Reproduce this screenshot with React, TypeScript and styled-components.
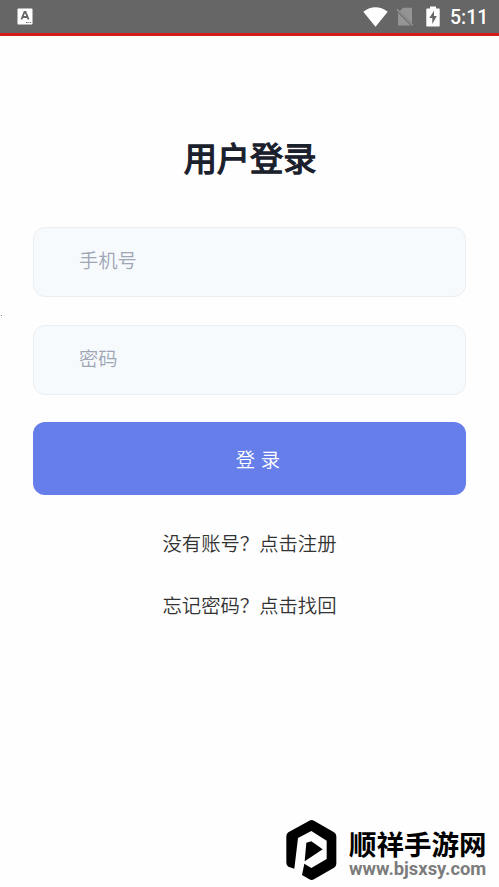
import React from 'react';
import styled, { createGlobalStyle } from 'styled-components';

const GlobalStyle = createGlobalStyle`
  * { box-sizing: border-box; }
  body { margin: 0; background: #fff; }
`;

const Screen = styled.div`
  position: relative;
  height: 887px;
  overflow: hidden;
  background: #fefefe;
  font-family: Roboto, 'Noto Sans CJK SC', sans-serif;
`;

const StatusBar = styled.header`
  display: flex;
  align-items: center;
  justify-content: space-between;
  height: 36px;
  padding: 0 11px 0 17px;
  background: #666;
  border-bottom: 3px solid #d51a1a;
`;

const StatusIcons = styled.div`
  display: flex;
  align-items: center;
`;

const StatusIcon = styled.svg<{ $gap?: number }>`
  display: block;
  margin-right: ${({ $gap = 0 }) => $gap}px;
`;

const Clock = styled.time`
  width: 38px;
  color: #fff;
  font-size: 19.5px;
  font-weight: 500;
  line-height: 33px;
  white-space: nowrap;
  padding-top: 2px;
`;

const LoginForm = styled.form`
  display: flex;
  flex-direction: column;
  padding: 99px 33px 0;
`;

const Title = styled.h1`
  margin: 0 0 42px;
  padding-left: 1px;
  color: #1a202c;
  font-size: 33.2px;
  font-weight: 400;
  -webkit-text-stroke: 1.3px #1a202c;
  line-height: 50px;
  text-align: center;
`;

const Field = styled.input`
  width: 100%;
  height: 70px;
  margin-bottom: 27.5px;
  padding: 0 45px 1px;
  border: 1px solid #ebeff2;
  border-radius: 12px;
  outline: none;
  background: #f6fafd;
  color: #1a202c;
  font: 350 19.3px Roboto, 'Noto Sans CJK SC', sans-serif;

  &::placeholder {
    color: #9ea5b4;
    opacity: 1;
  }
`;

const SubmitButton = styled.button`
  height: 73px;
  margin-bottom: 35px;
  padding: 0 0 0 17px;
  border: 0;
  border-radius: 12px;
  background: #667eea;
  color: #fff;
  font: 350 19.3px Roboto, 'Noto Sans CJK SC', sans-serif;
  word-spacing: 1px;
`;

const FormLink = styled.a`
  margin-bottom: 32px;
  color: #333;
  font-size: 19.35px;
  font-weight: 350;
  line-height: 30px;
  text-align: center;
`;

const EdgeMark = styled.span`
  position: absolute;
  top: 315px;
  left: 1px;
  width: 1px;
  height: 1px;
  background: #777;
`;

const Watermark = styled.aside`
  position: absolute;
  top: 819px;
  left: 286px;
  display: flex;
  gap: 12px;
`;

const WatermarkText = styled.div`
  display: flex;
  flex-direction: column;
  padding-top: 8px;
  white-space: nowrap;
`;

const SiteName = styled.strong`
  color: #000;
  font: 700 27.5px/32px 'Noto Sans CJK SC', sans-serif;
`;

const SiteAddress = styled.span`
  color: #7c7c7c;
  font: 700 18.4px/20px Roboto, sans-serif;
`;

const fields = [
  { label: '手机号', type: 'tel' },
  { label: '密码', type: 'password' },
];

const links = ['没有账号？点击注册', '忘记密码？点击找回'];

export default function App() {
  return (
    <Screen>
      <GlobalStyle />
      <StatusBar>
        <StatusIcon width="16" height="17" viewBox="0 0 16 17">
          <rect x="0.5" y="0.5" width="15" height="16" rx="1" fill="#fff" />
          <path d="M4.4 11.5 7.5 4h1l3.1 7.5M5.7 9h4.6" fill="none" stroke="#666" strokeWidth="1.8" />
          <path d="M9 14.5h1.5m.8 0h1m.8 0h1" stroke="#666" strokeWidth="1" />
        </StatusIcon>
        <StatusIcons>
          <StatusIcon $gap={8} width="25" height="20" viewBox="0 0 25 20">
            <path d="M.3 4.7Q12.5-4 24.7 4.7L12.5 19.8Z" fill="#fff" />
          </StatusIcon>
          <StatusIcon $gap={12} width="18" height="20" viewBox="0 0 18 20">
            <path d="M7 .8H16v15.2L3.8 4ZM2 5.7 14.8 18.5H2Z" fill="#949494" />
            <path d="m.8 2.2 16 16" stroke="#949494" strokeWidth="1.4" />
          </StatusIcon>
          <StatusIcon $gap={10} width="14" height="21" viewBox="0 0 14 21">
            <path d="M4 .5h6v2h3q.7 0 .7.7v16.6q0 .7-.7.7H1q-.7 0-.7-.7V3.2q0-.7.7-.7h3Z" fill="#fff" />
            <path d="M8 4.8 3.3 12h3V18L10.8 10H8Z" fill="#666" />
          </StatusIcon>
          <Clock>5:11</Clock>
        </StatusIcons>
      </StatusBar>

      <LoginForm>
        <Title>用户登录</Title>
        {fields.map(({ label, type }) => (
          <Field key={label} type={type} placeholder={label} />
        ))}
        <SubmitButton type="button">登 录</SubmitButton>
        {links.map((label) => (
          <FormLink key={label}>{label}</FormLink>
        ))}
      </LoginForm>

      <EdgeMark />
      <Watermark>
        <svg width="51" height="62" viewBox="48 27 153 186">
          <path
            d="M118 32Q125 28 132 32L192 67Q199 71 199 79V161Q199 169 192 173L132 208Q125 212 118 208L96 195 103 161 124 174 170 147V92L124 63 84 84 73 176 55 170Q49 166 49 158V79Q49 71 55 67Z"
            fill="#000"
          />
          <path d="M109 98 124 94 158 118 104 154Z" fill="#000" />
        </svg>
        <WatermarkText>
          <SiteName>顺祥手游网</SiteName>
          <SiteAddress>www.bjsxsy.com</SiteAddress>
        </WatermarkText>
      </Watermark>
    </Screen>
  );
}
